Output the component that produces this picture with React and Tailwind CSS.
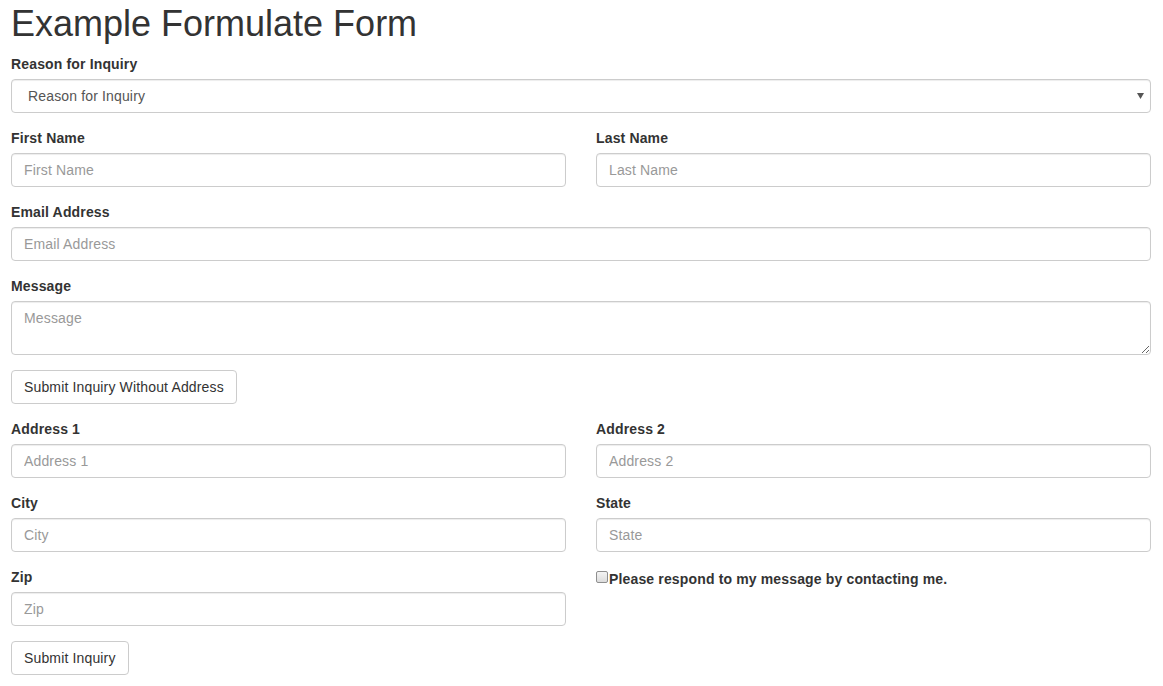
import React from "react";

const inputCls =
  "block w-full h-[34px] px-3 py-[6px] text-[14px] leading-[20px] tracking-[0.15px] text-[#555] bg-white border border-[#ccc] rounded-[4px] shadow-[inset_0_1px_1px_rgba(0,0,0,0.075)] placeholder:text-[#999] outline-none";

function Field({ label, placeholder }) {
  return (
    <div className="mb-[15px]">
      <label className="block mb-[5px] font-bold text-[14px] leading-[20px] text-[#333]">{label}</label>
      <input className={inputCls} placeholder={placeholder} />
    </div>
  );
}

function Button({ children }) {
  return (
    <button className="inline-block h-[34px] px-3 py-[6px] text-[14px] leading-[20px] tracking-[0.15px] text-[#333] bg-white border border-[#ccc] rounded-[4px]">
      {children}
    </button>
  );
}

export default function App() {
  return (
    <div className="bg-white min-h-[686px] px-[11px] text-[#333] text-[14px] leading-[20px] tracking-[0.15px]" style={{ fontFamily: '"Liberation Sans", Arial, sans-serif' }}>
      <div className="w-[1140px]">
        <h1 className="text-[36px] leading-[39.6px] tracking-normal pt-[4px] mb-[10px] text-[#333]">Example Formulate Form</h1>

        <div className="mb-[15px]">
          <label className="block mb-[5px] font-bold text-[14px] leading-[20px]">Reason for Inquiry</label>
          <div className="relative flex items-center w-full h-[34px] pl-[16px] pr-3 bg-white border border-[#ccc] rounded-[4px] shadow-[inset_0_1px_1px_rgba(0,0,0,0.075)] text-[#555]">
            <span>Reason for Inquiry</span>
            <svg className="absolute right-[6px] top-[13px]" width="7" height="6" viewBox="0 0 7 6">
              <path d="M0 0 L7 0 L3.5 6 Z" fill="#555" />
            </svg>
          </div>
        </div>

        <div className="grid grid-cols-2 gap-x-[30px]">
          <Field label="First Name" placeholder="First Name" />
          <Field label="Last Name" placeholder="Last Name" />
        </div>

        <Field label="Email Address" placeholder="Email Address" />

        <div className="mb-[15px]">
          <label className="block mb-[5px] font-bold text-[14px] leading-[20px]">Message</label>
          <textarea
            rows={2}
            className="block w-full h-[54px] px-3 py-[6px] text-[14px] leading-[20px] tracking-[0.15px] text-[#555] bg-white border border-[#ccc] rounded-[4px] shadow-[inset_0_1px_1px_rgba(0,0,0,0.075)] placeholder:text-[#999] outline-none"
            placeholder="Message"
          />
        </div>

        <div className="mb-[15px]">
          <Button>Submit Inquiry Without Address</Button>
        </div>

        <div className="grid grid-cols-2 gap-x-[30px]">
          <Field label="Address 1" placeholder="Address 1" />
          <Field label="Address 2" placeholder="Address 2" />
          <Field label="City" placeholder="City" />
          <Field label="State" placeholder="State" />
          <Field label="Zip" placeholder="Zip" />
          <div className="pt-[2px]">
            <label className="flex items-center font-bold text-[14px] leading-[20px] text-[#333]">
              <span className="inline-block w-[12px] h-[12px] mr-px border border-[#8f8f8f] rounded-[2px] bg-gradient-to-b from-[#f4f4f4] to-[#dcdcdc] -mt-[4px]"></span>
              Please respond to my message by contacting me.
            </label>
          </div>
        </div>

        <div>
          <Button>Submit Inquiry</Button>
        </div>
      </div>
    </div>
  );
}
